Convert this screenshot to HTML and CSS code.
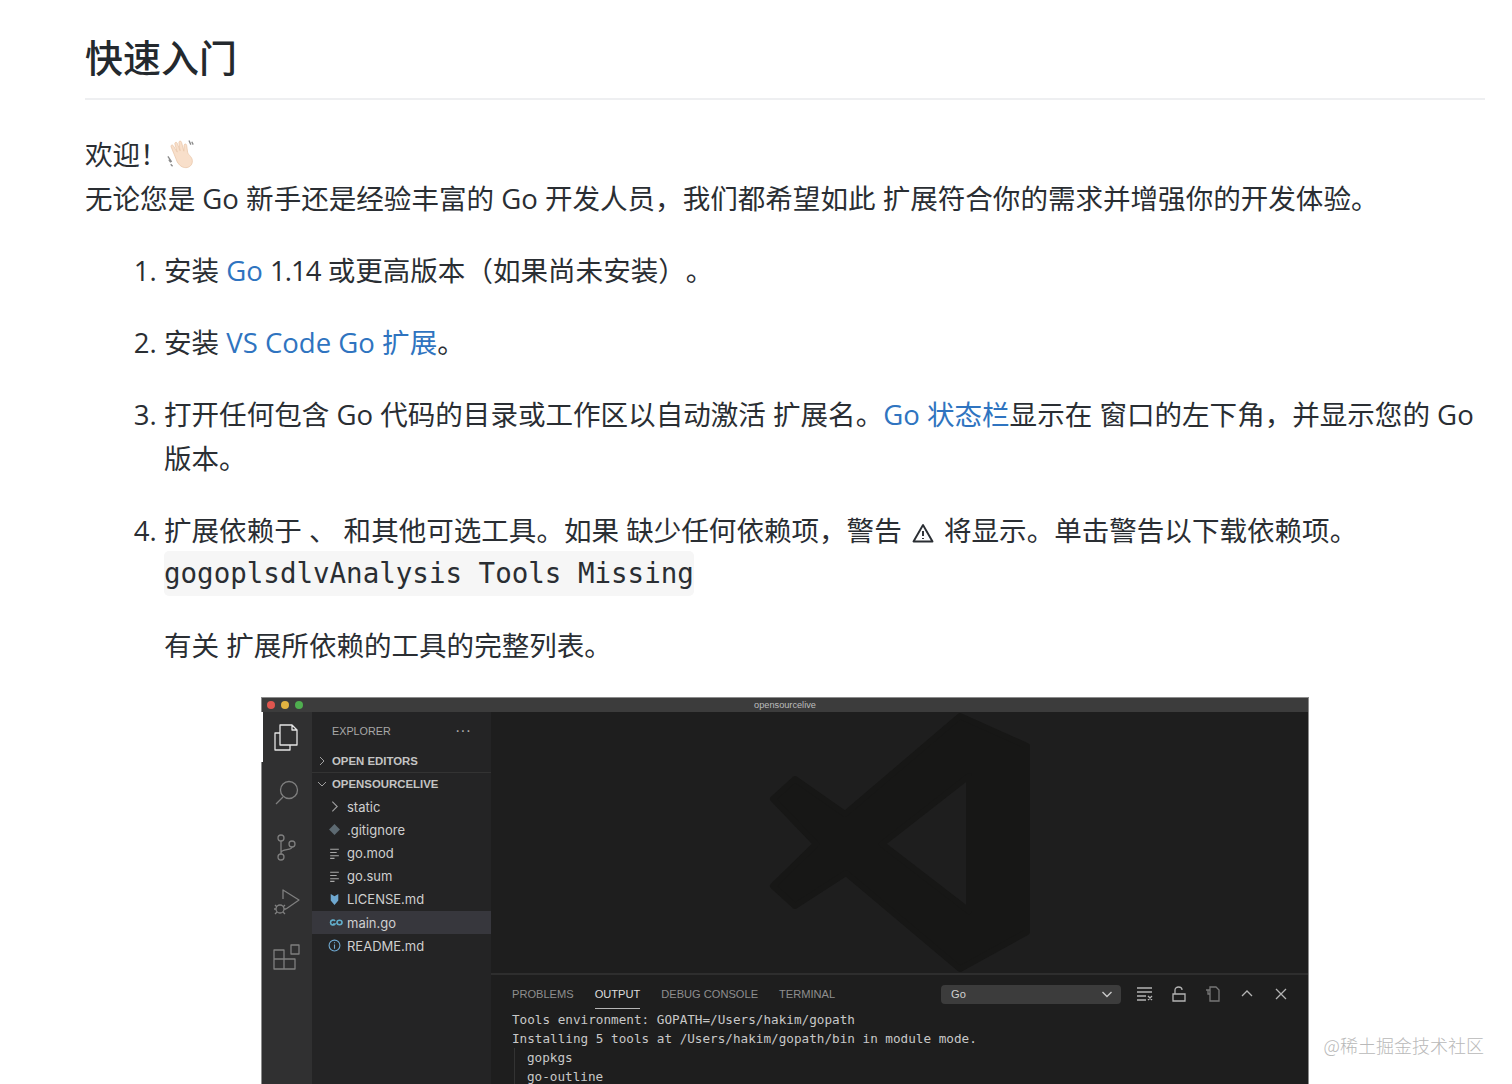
FILE: index.html
```html
<!DOCTYPE html>
<html lang="zh">
<head>
<meta charset="utf-8">
<title>快速入门</title>
<link rel="stylesheet" href="styles.css">
</head>
<body>
<main class="doc">
  <h2 class="title">快速入门</h2>
  <p class="intro">欢迎！<svg class="wave" viewBox="0 0 32 32"><path class="wave-hand" d="M9 17 5.500 8.500c-.8-2 1.500-3 2.500-1L12 14 9.500 5.500c-.6-2 1.900-2.700 2.600-.8L15 12.500 13.800 4c-.3-2.100 2.300-2.400 2.800-.4L19 13l.3-6.200c.1-2 2.600-1.900 2.700 0L23 14c1 4 6 5 5 11-.8 4-4.500 6-8 5.500-4-.5-6-3-8-6z"/><path class="wave-line" d="M3 22l2 3M2 18.500l4 6M5 27l2 2M27.500 3l1.500 3M24.500 1.500l2 4.500"/></svg><br>无论您是 Go 新手还是经验丰富的 Go 开发人员，我们都希望如此 扩展符合你的需求并增强你的开发体验。</p>
  <ol class="steps">
    <li>安装 <a href="#">Go</a> <span class="ver">1.14</span> 或更高版本（如果尚未安装）。</li>
    <li>安装 <a href="#">VS Code Go 扩展</a>。</li>
    <li>打开任何包含 Go 代码的目录或工作区以自动激活 扩展名。<a href="#">Go 状态栏</a>显示在 窗口的左下角，并显示您的 Go 版本。</li>
    <li>扩展依赖于 、 和其他可选工具。如果 缺少任何依赖项，警告 <svg class="warn" viewBox="0 0 28 24"><path d="M14 4 4.500 20.500h19zM14 10v5M14 17v1"/></svg> 将显示。单击警告以下载依赖项。<br><code>gogoplsdlvAnalysis Tools Missing</code>
      <p class="note">有关 扩展所依赖的工具的完整列表。</p>
      <div class="shot">
        <div class="titlebar">
          <span class="light red"></span><span class="light amber"></span><span class="light green"></span>
          <span class="window-name">opensourcelive</span>
        </div>
        <div class="workbench">
          <nav class="activity">
            <svg class="act-icon active" viewBox="0 0 30 30"><path d="M9 11H4v17h15v-5M9 3h12l5 5v15H9zM21 3v5h5"/></svg>
            <svg class="act-icon" viewBox="0 0 30 30"><circle cx="18" cy="13" r="8.500"/><path d="M12 20 5 27"/></svg>
            <svg class="act-icon" viewBox="0 0 30 30"><circle cx="10" cy="6" r="3"/><circle cx="10" cy="25" r="3"/><circle cx="21" cy="12" r="3"/><path d="M10 9v13M10 21c0-5 11-2 11-6"/></svg>
            <svg class="act-icon" viewBox="0 0 30 30"><path d="M12 12V3l16 10-13 9"/><circle cx="9" cy="22" r="4"/><path d="M4 18l2 2M14 18l-2 2M3 22h2M13 22h2M4 27l2-2M14 27l-2-2"/></svg>
            <svg class="act-icon" viewBox="0 0 30 30"><path d="M3 8h10v9h11v10H3zM3 17h10v10"/><path d="M20 3h8v9h-8z"/></svg>
          </nav>
          <aside class="sidebar">
            <div class="explorer"><span>EXPLORER</span><span class="dots">···</span></div>
            <div class="row section open-editors"><svg class="chev" viewBox="0 0 10 10"><path d="M3 1l4 4-4 4"/></svg>OPEN EDITORS</div>
            <div class="row section"><svg class="chev" viewBox="0 0 10 10"><path d="M1 3l4 4 4-4"/></svg>OPENSOURCELIVE</div>
            <div class="row file"><svg class="file-icon" viewBox="0 0 12 12"><path class="chev-line" d="M4 1.500 8.500 6 4 10.500"/></svg>static</div>
            <div class="row file"><svg class="file-icon" viewBox="0 0 12 12"><path class="git" d="M6 1l5 5-5 5-5-5z"/></svg>.gitignore</div>
            <div class="row file"><svg class="file-icon" viewBox="0 0 12 12"><path class="lines" d="M2 2h8M2 5h6M2 8h8M2 10.500h4"/></svg>go.mod</div>
            <div class="row file"><svg class="file-icon" viewBox="0 0 12 12"><path class="lines" d="M2 2h8M2 5h6M2 8h8M2 10.500h4"/></svg>go.sum</div>
            <div class="row file"><svg class="file-icon" viewBox="0 0 12 12"><path class="license" d="M2.500 1 6 3l3.500-2v6L6 11 2.500 7z"/></svg>LICENSE.md</div>
            <div class="row file selected"><svg class="file-icon wide" viewBox="0 0 16 12"><path class="go" d="M7 4.500C6 3 2.500 3.200 2.500 6S6 9 7 7.500H5M9 6c0-3 5-3 5 0s-5 3-5 0z"/></svg>main.go</div>
            <div class="row file"><svg class="file-icon" viewBox="0 0 12 12"><circle class="info" cx="6" cy="6" r="5"/><path class="info" d="M6 5v4M6 3v1"/></svg>README.md</div>
          </aside>
          <section class="main-area">
            <div class="editor">
              <svg class="logo" viewBox="0 0 262 260"><path fill-rule="evenodd" d="M191 3 258 33V219L191 256 77 160 26 193 4 173 47 131 4 86 26 66 76 101zM200 63 113 131 200 198z"/></svg>
            </div>
            <div class="panel">
              <div class="panel-head">
                <span class="tab">PROBLEMS</span>
                <span class="tab current">OUTPUT</span>
                <span class="tab">DEBUG CONSOLE</span>
                <span class="tab">TERMINAL</span>
                <div class="select"><span>Go</span><svg class="select-chev" viewBox="0 0 12 12"><path d="M1.500 4 6 8.500 10.500 4"/></svg></div>
                <svg class="tool" viewBox="0 0 18 18"><path d="M1 3h15M1 7h15M1 11h9M1 15h9M12 11l4 4M16 11l-4 4"/></svg>
                <svg class="tool" viewBox="0 0 18 18"><path d="M3 9h12v7H3zM5 9V5c0-4 7-4 7 0"/></svg>
                <svg class="tool dim" viewBox="0 0 18 18"><path d="M6 2h6l3 3v11H6zM6 5H2M6 9H4V5"/></svg>
                <svg class="tool" viewBox="0 0 18 18"><path d="M4 11l5-5 5 5"/></svg>
                <svg class="tool" viewBox="0 0 18 18"><path d="M4 4l10 10M14 4 4 14"/></svg>
              </div>
              <div class="output">
                <div>Tools environment: GOPATH=/Users/hakim/gopath</div>
                <div>Installing 5 tools at /Users/hakim/gopath/bin in module mode.</div>
                <div class="tree">
                  <div>gopkgs</div>
                  <div>go-outline</div>
                </div>
              </div>
            </div>
          </section>
        </div>
      </div>
    </li>
  </ol>
</main>
<div class="watermark">@稀土掘金技术社区</div>
</body>
</html>
```
FILE: styles.css
```css
html, body { margin: 0; padding: 0; background: #fff; }
body { height: 1084px; overflow: hidden; position: relative; }
.doc {
  padding: 33px 27px 0 85px;
  font-family: "Open Sans", "Noto Sans CJK SC", sans-serif;
  font-size: 27.550px;
  line-height: 44px;
  color: #2a2e33;
  text-spacing-trim: space-all;
}
.title {
  margin: 0 0 33px;
  padding-bottom: 17px;
  border-bottom: 2px solid #eeeff1;
  font-size: 38px;
  line-height: 48px;
  font-weight: 500;
  color: #24292e;
}
.intro { margin: 0; }
.wave { width: 30px; height: 30px; margin-left: -2px; vertical-align: -4px; }
.wave-hand { fill: #f8dfca; stroke: #e8c6a8; stroke-width: .8; }
.wave-line { fill: none; stroke: #8a8a8a; stroke-width: 1.400; }
.steps { margin: 28px 0 0; padding: 0 0 0 79px; }
.steps li { margin-top: 28px; }
.steps li:first-child { margin-top: 0; }
.ver { letter-spacing: -1px; }
a { color: #2f74c0; text-decoration: none; }
.warn {
  width: 28px;
  height: 24px;
  vertical-align: -4px;
  fill: none;
  stroke: #2a2e33;
  stroke-width: 1.900;
  stroke-linejoin: round;
}
code {
  font-family: "DejaVu Sans Mono", monospace;
  font-size: 27.500px;
  background: #f6f6f6;
  border-radius: 5px;
  padding: 6px 0 7px;
  position: relative;
  top: -2px;
}
.note { margin: 27px 0 0; }
.shot {
  width: 1048px;
  margin: 29px 0 0 97px;
  height: 430px;
  background: #1e1e1e;
  box-shadow: inset 0 0 0 1px #8c8c8c;
  padding: 0 1px;
  box-sizing: border-box;
  border-top: 1px solid #8c8c8c;
  font-family: "Liberation Sans", sans-serif;
  line-height: normal;
}
.titlebar {
  height: 14px;
  background: #3c3c3c;
  display: flex;
  align-items: center;
  gap: 6px;
  padding-left: 5px;
  position: relative;
}
.light { width: 8px; height: 8px; border-radius: 50%; }
.red { background: #e0564f; }
.amber { background: #e3b341; }
.green { background: #4fae4f; }
.window-name {
  position: absolute;
  left: 0; right: 0;
  text-align: center;
  font-size: 9.200px;
  color: #bdbdbd;
}
.workbench { display: flex; height: 415px; }
.activity {
  width: 50px;
  flex: none;
  background: #303031;
  display: flex;
  flex-direction: column;
  align-items: center;
  gap: 25px;
  padding: 10px 3px 0 0;
  box-sizing: border-box;
  position: relative;
}
.activity::before {
  content: "";
  position: absolute;
  left: -1px; top: 0;
  width: 2px; height: 50px;
  background: #fff;
}
.act-icon { width: 30px; height: 30px; flex: none; fill: none; stroke: #7f7f7f; stroke-width: 1.300; stroke-linejoin: round; }
.act-icon.active { stroke: #e4e4e4; }
.sidebar {
  width: 179px;
  flex: none;
  background: #242425;
  color: #cfcfcf;
  font-size: 13.200px;
}
.explorer {
  display: flex;
  justify-content: space-between;
  align-items: center;
  height: 37px;
  padding: 0 20px 0 20px;
  font-size: 10.800px;
  color: #a8a8a8;
}
.dots { font-size: 16px; }
.row { height: 23.150px; display: flex; align-items: center; }
.section { padding-left: 5px; font-size: 11.400px; font-weight: 700; gap: 5px; color: #c4c4c4; }
.open-editors { box-shadow: 0 1px 0 #333; }
.chev { width: 10px; height: 10px; fill: none; stroke: #a0a0a0; stroke-width: 1; }
.file { padding-left: 16px; gap: 6px; font-family: "Inter", "Liberation Sans", sans-serif; font-size: 13px; }
.file-icon { width: 13px; height: 13px; flex: none; fill: none; stroke: #a0a0a0; stroke-width: 1; }
.file-icon.wide { width: 16px; margin-right: -3px; }
.git { fill: #5d6a72; stroke: none; }
.lines { stroke: #a8a8a8; }
.license { fill: #6fa8d0; stroke: none; }
.go { stroke: #62aecb; stroke-width: 1.600; }
.info { stroke: #6fa8d0; }
.selected { background: #37373d; }
.main-area { flex: 1; display: flex; flex-direction: column; min-width: 0; }
.editor {
  height: 261px;
  flex: none;
  background: #1e1e1e;
  display: flex;
  align-items: center;
  justify-content: center;
}
.logo {
  width: 262px;
  height: 260px;
  fill: #171716;
  stroke: #171716;
  stroke-width: 6;
  stroke-linejoin: round;
}
.panel { flex: 1; border-top: 2px solid #2e2e2e; background: #1e1e1e; }
.panel-head {
  display: flex;
  align-items: center;
  gap: 21px;
  height: 32px;
  padding: 3px 18px 0 21px;
  font-size: 11.100px;
  color: #8e8e8e;
  white-space: nowrap;
}
.tab { position: relative; }
.current { color: #dedede; }
.current::after {
  content: "";
  position: absolute;
  left: 0; right: 0;
  bottom: -9px;
  height: 1px;
  background: #b5b5b5;
}
.select {
  width: 180px;
  height: 19px;
  margin-left: auto;
  margin-right: -1px;
  background: #3c3c3c;
  border-radius: 4px;
  display: flex;
  align-items: center;
  justify-content: space-between;
  padding: 0 8px 0 10px;
  box-sizing: border-box;
  color: #d0d0d0;
}
.select-chev { width: 12px; height: 12px; fill: none; stroke: #c8c8c8; stroke-width: 1.400; }
.tool { width: 18px; height: 18px; margin-left: -5px; flex: none; fill: none; stroke: #b4b4b4; stroke-width: 1.300; }
.tool.dim { stroke: #777; }
.output {
  padding-left: 21px;
  font-family: "DejaVu Sans Mono", monospace;
  font-size: 12.660px;
  line-height: 19px;
  color: #c8c8c8;
}
.tree { margin-left: 2px; padding-left: 12px; border-left: 1px solid #333; }
.watermark {
  position: absolute;
  right: 28px;
  top: 1032px;
  font-family: "Noto Sans CJK SC", sans-serif;
  font-size: 18px;
  line-height: 26px;
  font-weight: 300;
  color: #b9b9b9;
}
```
